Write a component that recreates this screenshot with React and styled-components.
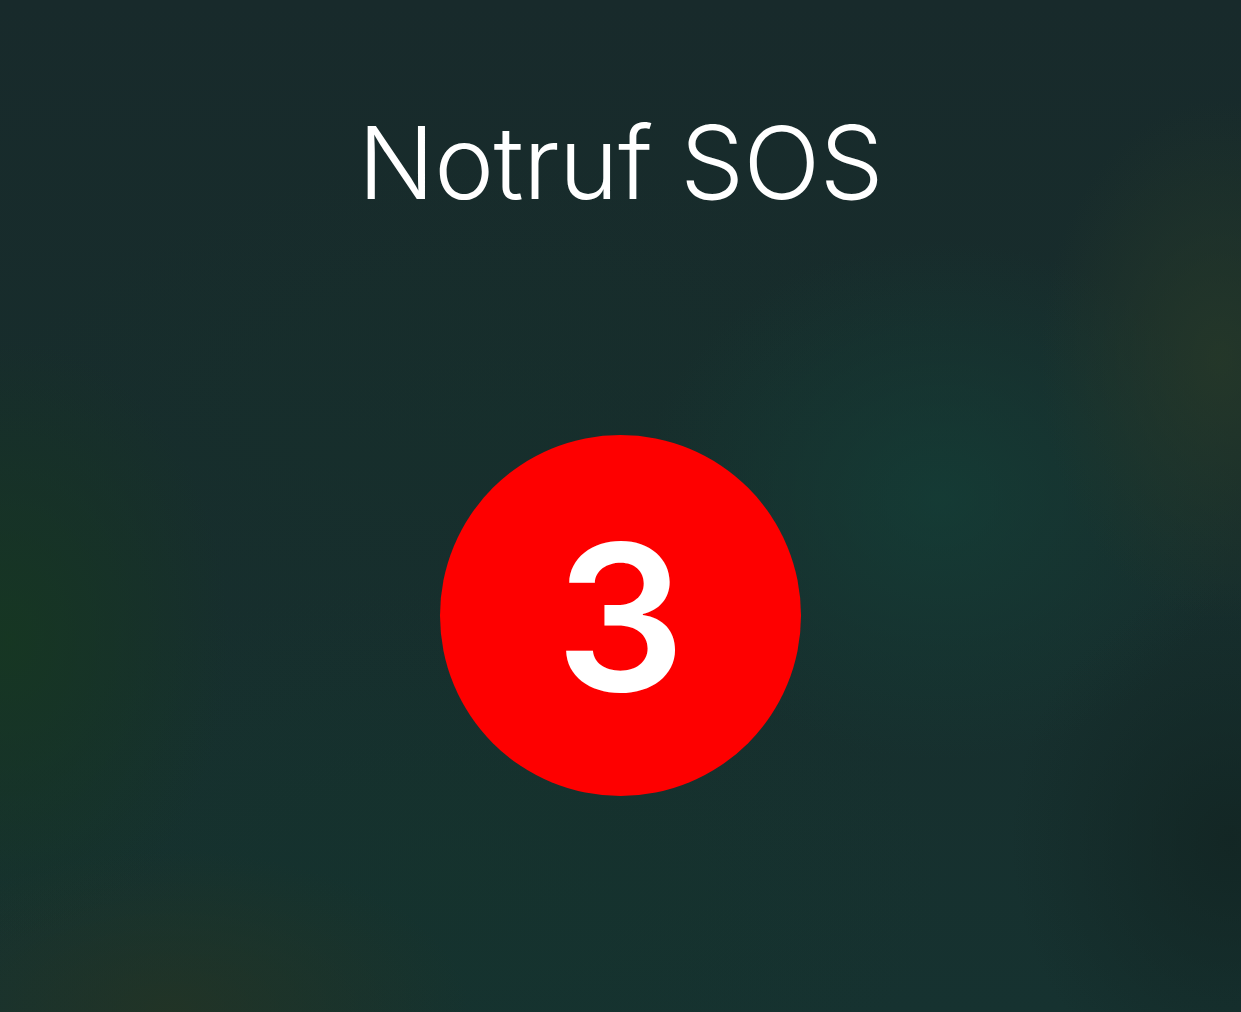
import React from "react";
import styled, { createGlobalStyle } from "styled-components";

const GlobalStyle = createGlobalStyle`
    html, body {
        margin: 0;
        padding: 0;
        background: #172a2a;
    }
`;

function App() {
    return (
        <>
            <GlobalStyle />
            <Screen>
                <Title>Notruf SOS</Title>
                <Countdown>
                    <Digit>3</Digit>
                </Countdown>
            </Screen>
        </>
    );
}

export default App;

const Screen = styled.div`
    width: 1241px;
    height: 1012px;
    overflow: hidden;
    display: flex;
    flex-direction: column;
    align-items: center;
    box-sizing: border-box;
    padding-top: 112px;
    font-family: Inter, "Noto Sans", sans-serif;
    background-color: #172c2b;
    background-image:
        radial-gradient(ellipse 180px 260px at 1220px 360px, rgba(40, 58, 40, 0.75), transparent),
        radial-gradient(ellipse 300px 260px at 940px 500px, rgba(20, 64, 56, 0.7), transparent),
        radial-gradient(ellipse 220px 300px at 10px 640px, rgba(22, 56, 32, 0.8), transparent),
        radial-gradient(ellipse 300px 160px at 170px 1010px, rgba(36, 52, 36, 0.8), transparent),
        radial-gradient(ellipse 220px 260px at 1230px 840px, rgba(18, 36, 34, 0.8), transparent),
        radial-gradient(ellipse 500px 300px at 450px 880px, rgba(20, 52, 44, 0.5), transparent),
        radial-gradient(ellipse 500px 260px at 500px 420px, rgba(22, 48, 44, 0.5), transparent),
        linear-gradient(180deg, #182a2b 0%, #172d2c 45%, #163230 100%);
`;

const Title = styled.h1`
    margin: 0;
    font-size: 101px;
    font-weight: 300;
    line-height: 1;
    color: #ffffff;
    letter-spacing: -0.5px;
`;

const Countdown = styled.div`
    margin-top: 222px;
    width: 361px;
    height: 361px;
    border-radius: 50%;
    background: #fe0000;
    display: flex;
    align-items: center;
    justify-content: center;
`;

const Digit = styled.span`
    font-size: 204px;
    font-weight: 600;
    line-height: 1;
    color: #ffffff;
    margin-top: 2px;
`;
